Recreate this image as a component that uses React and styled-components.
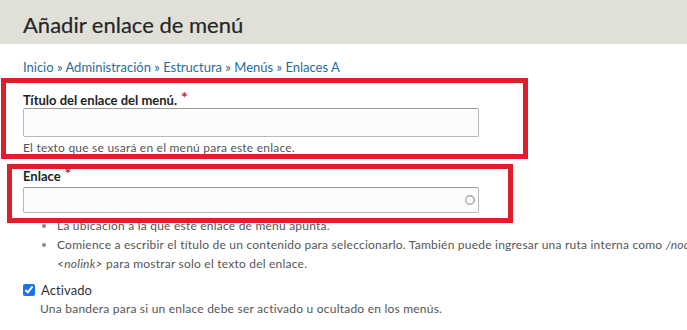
import styled, { createGlobalStyle } from "styled-components";

const GlobalStyle = createGlobalStyle`
  body {
    margin: 0;
    overflow: hidden;
    background: #fff;
    font-family: Lato, "Open Sans", sans-serif;
    color: #333;
  }
`;

const Page = styled.div`
  position: relative;
  width: 1400px;
`;

const Header = styled.header`
  height: 44px;
  background: #e0e0d8;
  padding-left: 23px;
  display: flex;
  align-items: center;
`;

const Title = styled.h1`
  margin: 0;
  font-size: 22px;
  font-weight: 400;
  color: #262626;
  padding-top: 4px;
  -webkit-text-stroke: 0.2px #262626;
`;

const Main = styled.main`
  padding: 15px 23px 0;
`;

const Breadcrumb = styled.nav`
  font-size: 13px;
  line-height: 16px;
  color: #1f6e96;
  a {
    color: inherit;
    text-decoration: none;
  }
`;

const Field = styled.div`
  margin-top: ${(p) => p.$gap}px;
`;

const Label = styled.label`
  display: block;
  font-size: 13px;
  line-height: 16px;
  height: 16px;
  font-weight: 700;
  color: #222;
`;

const Required = styled.span`
  color: #c4262e;
  margin-left: 4px;
  font-size: 16px;
  line-height: 0;
  position: relative;
  top: -2px;
`;

const InputWrap = styled.div`
  position: relative;
  width: 456px;
  height: ${(p) => p.$h}px;
  margin-top: ${(p) => p.$top}px;
  box-sizing: border-box;
  border: 1px solid #b8b8b8;
  border-top-color: #999;
  background: #fcfcfa;
  border-radius: 2px;
`;

const Throbber = styled.svg`
  position: absolute;
  right: 2px;
  top: 50%;
  transform: translateY(-50%);
`;

const Description = styled.div`
  font-size: 12px;
  line-height: 16px;
  letter-spacing: 0.22px;
  color: #555;
  margin-top: 3px;
  white-space: nowrap;
  padding-left: ${(p) => p.$indent || 0}px;
`;

const List = styled.ul`
  margin: 3px 0 0;
  padding: 0 0 0 34px;
  list-style: none;
  font-size: 12px;
  line-height: 19px;
  letter-spacing: 0.22px;
  color: #555;
  white-space: nowrap;
  li {
    position: relative;
  }
  li::before {
    content: "";
    position: absolute;
    left: -15px;
    top: 8px;
    width: 4px;
    height: 4px;
    border-radius: 50%;
    background: #888;
  }
  em {
    font-style: italic;
  }
`;

const CheckRow = styled.div`
  display: flex;
  align-items: center;
  gap: 6px;
  margin-top: 9px;
  font-size: 13px;
  line-height: 16px;
  letter-spacing: 0.1px;
  color: #333;
  input {
    margin: 0;
    width: 12px;
    height: 12px;
    accent-color: #1a73e8;
  }
`;

const Annotation = styled.div`
  position: absolute;
  left: ${(p) => p.$x}px;
  top: ${(p) => p.$y}px;
  width: ${(p) => p.$w}px;
  height: ${(p) => p.$h}px;
  box-sizing: border-box;
  border: 5px solid #dc1f2b;
  pointer-events: none;
`;

export default function App() {
  return (
    <Page>
      <GlobalStyle />
      <Header>
        <Title>Añadir enlace de menú</Title>
      </Header>
      <Main>
        <Breadcrumb>
          <a href="#">Inicio</a> » <a href="#">Administración</a> »{" "}
          <a href="#">Estructura</a> » <a href="#">Menús</a> »{" "}
          <a href="#">Enlaces A</a>
        </Breadcrumb>

        <Field $gap={17}>
          <Label>
            Título del enlace del menú.<Required>*</Required>
          </Label>
          <InputWrap $h={29} $top={0} />
          <Description>El texto que se usará en el menú para este enlace.</Description>
        </Field>

        <Field $gap={12}>
          <Label>
            Enlace<Required>*</Required>
          </Label>
          <InputWrap $h={26} $top={3}>
            <Throbber width="12" height="12" viewBox="0 0 12 12">
              <circle cx="6" cy="6" r="4.3" fill="none" stroke="#a8a8a8" strokeWidth="1.4" />
            </Throbber>
          </InputWrap>
          <List>
            <li>La ubicación a la que este enlace de menú apunta.</li>
            <li>
              Comience a escribir el título de un contenido para seleccionarlo. También puede
              ingresar una ruta interna como <em>/node/add</em> o una URL externa como{" "}
              <em>http://example.com</em>.
              <br />
              <em>&lt;nolink&gt;</em> para mostrar solo el texto del enlace.
            </li>
          </List>
        </Field>

        <CheckRow>
          <input type="checkbox" defaultChecked />
          <span>Activado</span>
        </CheckRow>
        <Description $indent={17}>
          Una bandera para si un enlace debe ser activado u ocultado en los menús.
        </Description>
      </Main>

      <Annotation $x={1} $y={78} $w={527} $h={81} />
      <Annotation $x={7} $y={164} $w={506} $h={59} />
    </Page>
  );
}
